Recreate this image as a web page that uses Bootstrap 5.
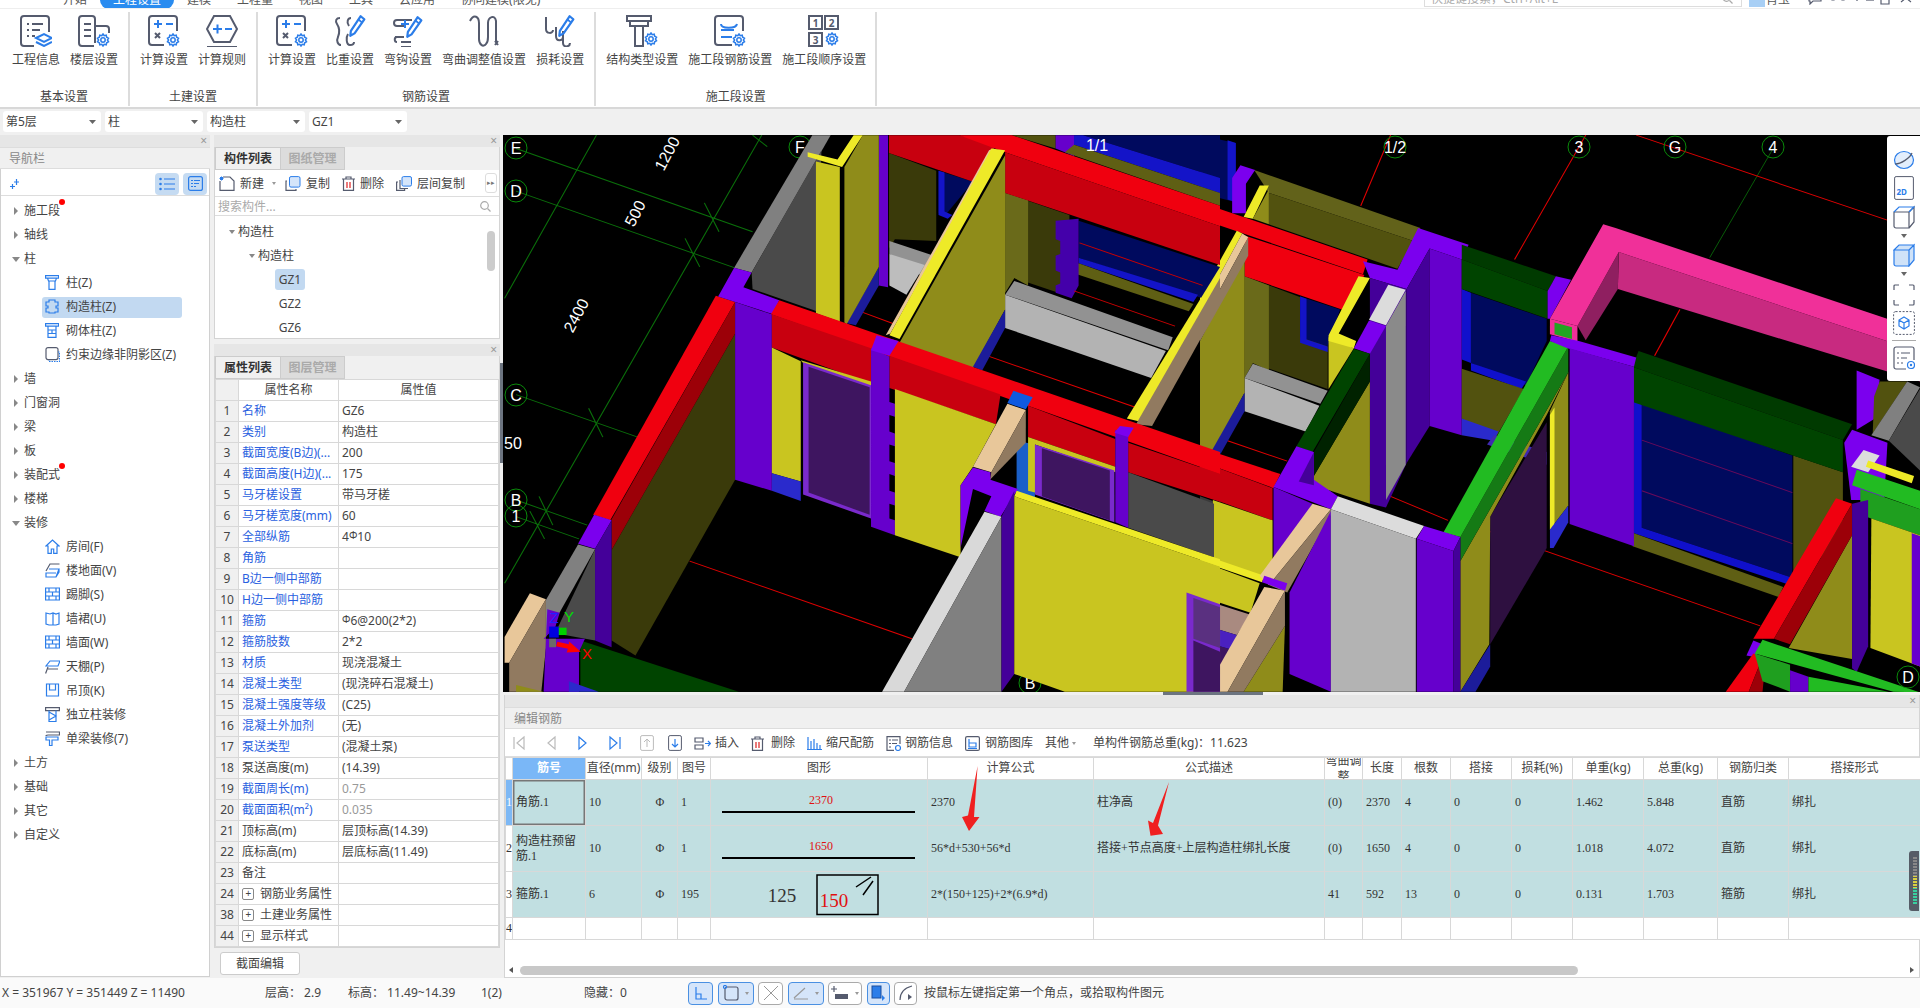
<!DOCTYPE html>
<html lang="zh-CN">
<head>
<meta charset="UTF-8">
<title>编辑钢筋</title>
<link href="https://cdn.jsdelivr.net/npm/bootstrap@5.3.0/dist/css/bootstrap.min.css" rel="stylesheet">
<style>
html,body{margin:0;height:100%;overflow:hidden}
body{width:1920px;height:1008px;background:#f0f0f0;color:#444;font:12px/1.3 "Noto Sans","Noto Sans CJK SC",sans-serif}
svg{display:block;flex:none}
.gl-st{fill:none;stroke:#555b6e;stroke-width:2}
.gl-bl{fill:none;stroke:#2b7de9;stroke-width:2}
.gl-thin{fill:none;stroke:#555b6e;stroke-width:1.2}
.gl-tb{fill:none;stroke:#2b7de9;stroke-width:1.2}
/* title strip, cut off at the top of the shot */
.gl-title{height:9px;background:#fff;overflow:hidden;border-bottom:1px solid #eee;color:#555}
.gl-title-in{height:18px;margin-top:-9px;line-height:18px}
.gl-menu{padding:0 13px;white-space:nowrap}
.gl-menu-on{background:#2a8cf0;color:#fff;border-radius:10px}
.gl-logo{width:50px}
.gl-winbtns{margin-left:auto;padding-right:8px}
.gl-search{position:relative;width:318px;height:17px;margin-top:-1px;border:1px solid #ddd;background:#fff;color:#aaa;padding:0 8px 0 6px;line-height:17px}
.gl-user{width:16px;height:16px;margin:0 1px 0 7px;background:#a8cff5}
.gl-wm5{margin-left:5px}.gl-wm6{margin-left:6px}.gl-wm7{margin-left:7px}.gl-wm8{margin-left:8px}.gl-wm10{margin-left:10px}.gl-wm18{margin-left:18px}
/* ribbon */
.gl-ribbon{height:100px;background:#fff;border-bottom:2px solid #d8d8d8}
.gl-group{position:relative;height:94px;margin-top:3px;padding:3px 10px 0;border-right:2px solid #dcdcdc;gap:10px;white-space:nowrap}
.gl-group:first-child{padding-left:12px}
.gl-tool{min-width:48px}
.gl-tool span{display:block;margin-top:5px;line-height:16px;text-align:center}
.gl-glabel{position:absolute;left:0;right:0;bottom:1px;text-align:center;line-height:16px}
/* combos */
.gl-combos{height:26px;padding:2px 0 0 3px;gap:4px}
.gl-combos .form-select{width:98px;height:21px;padding:0 0 0 3px;font-size:12px;line-height:21px;color:#444;border:0;border-radius:3px;background-size:7px 4px;background-position:right 5px center;background-image:url("data:image/svg+xml,%3Csvg xmlns='http://www.w3.org/2000/svg' viewBox='0 0 7 4'%3E%3Cpath fill='%23666' d='M0 0h7L3.5 4z'/%3E%3C/svg%3E")}
/* panels */
.gl-main{height:843px}
.gl-cross{height:12px;background:#e6e6e6;color:#999;font-size:12px;line-height:11px;text-align:right;padding-right:3px}
.gl-phead{height:22px;line-height:22px;padding-left:9px;background:#f0f0f0;color:#888;border-top:1px solid #ddd;border-bottom:1px solid #ddd;font-size:12px}
.gl-nav{width:210px;margin-right:4px}
.gl-navbody{height:808px;background:#fff;border:1px solid #d0d0d0;border-top:0}
.gl-navtool{height:27px;padding:3px 2px 0 9px;border-bottom:1px solid #ddd}
.gl-tbtn{width:24px;height:22px;background:#c5dbf2;border-radius:4px;margin-left:4px}
.gl-tree{list-style:none;margin:0;padding:3px 0 0}
.gl-tree li{position:relative;height:24px;line-height:24px;padding-left:23px;color:#444;white-space:nowrap}
.gl-tree li.gl-sub{padding-left:65px}
.gl-tree li.gl-sub svg{position:absolute;left:44px;top:4px;z-index:1}
.gl-tree li.gl-on::before{content:"";position:absolute;left:41px;top:2px;width:140px;height:21px;background:#c2d9f1;border-radius:3px;z-index:0}
.gl-tree li>span{position:relative}
.gl-arr,.gl-arrd{position:absolute;top:8px;width:0;height:0;border-style:solid}
.gl-arr{left:13px;border-width:4px 0 4px 4px;border-color:transparent transparent transparent #888}
.gl-arrd{left:11px;top:10px;border-width:5px 4px 0;border-color:#888 transparent transparent}
.gl-dot{position:absolute;top:-3px;right:-5px;width:6px;height:6px;border-radius:50%;background:#f00}
.gl-mid{width:286px;margin-right:3px}
.gl-midpanel{border:1px solid #d4d4d4;border-top:0;background:#fff}
.gl-tabs{height:23px;background:#f0f0f0;flex-wrap:nowrap}
.gl-tabs .nav-link{width:65px;height:23px;padding:0;text-align:center;line-height:22px;font-weight:700;font-size:12px;color:#aaa;background:#dcdcdc;border:1px solid #ccc;border-radius:0}
.gl-tabs .nav-link.active{background:#f0f0f0;color:#333;border-right:0}
.gl-mtool{height:27px;padding:1px 0 0 4px;border-bottom:1px solid #ddd;background:#fff;white-space:nowrap;position:relative}
.gl-mtool span{margin:0 12px 0 5px}
.gl-more{position:absolute;right:2px;top:3px;width:12px;height:20px;border:1px solid #ddd;border-radius:3px;color:#777;font-size:7px;line-height:18px;text-align:center}
.gl-msearch{height:19px;line-height:19px;padding:0 8px 0 3px;color:#aaa;border-bottom:1px solid #ddd;background:#fff}
.gl-ctree{height:122px;position:relative;background:#fff;padding-top:4px;overflow:hidden}
.gl-ctree div{position:relative;height:24px;line-height:24px;color:#444}
.gl-c1{padding-left:23px}.gl-c2{padding-left:43px}
.gl-c3{padding-left:60px}
.gl-c3 b{font-weight:400;display:inline-block;width:30px;height:21px;line-height:21px;text-align:center;border-radius:3px}
.gl-c3 b.gl-pick{background:#c2d9f1}
.gl-ctree .gl-arrd{left:14px;top:10px;border-width:4px 3px 0}
.gl-ctree .gl-c2 .gl-arrd{left:34px}
.gl-vbar{position:absolute;right:4px;top:15px;width:8px;height:40px;border-radius:4px;background:#ccc}
.gl-gap5{height:5px}
.gl-ptable{table-layout:fixed;width:283px;margin:0;font-size:12px;background:#fff}
.gl-ptable>:not(caption)>*>*{padding:0 3px;height:21px;line-height:20px;border:1px solid #d8d8d8;white-space:nowrap;overflow:hidden;color:#444;background:#fff;box-shadow:none}
.gl-ptable th{font-weight:400;text-align:center}
.gl-ptable td:first-child,.gl-ptable th:first-child{background:#f0f0f0;text-align:center;padding:0}
.gl-ptable td.gl-b{color:#2a5fe0}
.gl-ptable td.gl-mute{color:#999}
.gl-plus{display:inline-block;position:relative;top:2px;width:12px;height:12px;border:1px solid #888;border-radius:2px;line-height:9px;text-align:center;font-size:10px;margin:0 6px 0 0;vertical-align:top;margin-top:2px}
.gl-secbtn{width:80px;height:23px;margin:4px 0 0 6px;padding:0;font-size:12px;line-height:20px;color:#444;background:#fff;border:1px solid #ccc;border-radius:3px}
.gl-right{width:1417px}
.gl-canvas{position:relative;height:557px;background:#000;overflow:hidden}
.gl-viewbar{position:absolute;right:0;top:1px;width:33px;height:245px;background:#fff;border-radius:3px 0 0 3px;gap:5px;padding-top:13px}
.gl-vtri{width:0;height:0;border-style:solid;border-width:4px 3.5px 0;border-color:#666 transparent transparent}
.gl-vline{width:24px;border-top:1px solid #aaa}
.gl-vgap{margin-top:3px}
.gl-split{position:relative;height:3px}
.gl-split i{position:absolute;left:660px;top:0;width:100px;height:3px;background:#6c7480}
.gl-vsplit{width:3px;position:relative;margin-left:-3px;margin-right:0}
.gl-vsplit i{position:absolute;left:0;top:228px;width:3px;height:100px;background:#6c7480}
.gl-edit{position:relative;height:283px;margin-left:1px;border:1px solid #d4d4d4;border-top:0;background:#fff}
.gl-etool{height:28px;padding:1px 0 0 6px;border-bottom:1px solid #ddd;white-space:nowrap;color:#444}
.gl-etool .gl-nv{margin-right:16px}
.gl-etool .gl-up{margin-right:12px}
.gl-etool .gl-ic{margin-right:4px}
.gl-etool .gl-tx{margin-right:12px}
.gl-caret{width:0;height:0;margin:0 9px 0 -3px;border-style:solid;border-width:3px 2.5px 0;border-color:#999 transparent transparent}
.gl-etool .gl-caret{margin-right:17px}
.gl-grid{table-layout:fixed;width:1415px;margin:0;font:12px/1.2 "Liberation Serif","Noto Sans CJK SC",serif}
.gl-grid>:not(caption)>*>*{padding:0 2px 0 3px;border:1px solid #d8d8d8;background:#fff;color:#333;box-shadow:none;vertical-align:middle;overflow:hidden}
.gl-grid th{height:22px;padding:0;font-weight:400;text-align:center;white-space:nowrap;font-family:"Noto Sans","Noto Sans CJK SC",sans-serif;color:#444}
.gl-grid tbody tr.gl-row td{height:46px;background:#c1dfe1}
.gl-grid tbody tr td.gl-rn,.gl-grid tbody tr.gl-row td.gl-rn{background:#fff;padding:0;text-align:center}
.gl-grid tbody tr td.gl-cur{box-shadow:inset 0 0 0 1.5px #777}
.gl-grid tbody tr.gl-row td.gl-rn.gl-rnon{background:#7db8f5;color:#fff}
.gl-grid tr.gl-blank td{height:22px}
.gl-grid th.gl-headon{background:#7ab7f7;color:#fff;font-weight:700}
.gl-bendin{height:21px;overflow:hidden;display:flex;align-items:center;justify-content:center;line-height:16px;white-space:normal}
.gl-grid td.gl-shape{padding:0}
.gl-hs{position:absolute;left:4px;right:3px;bottom:2px;height:9px}
.gl-hs i{position:absolute;left:11px;top:0;width:1058px;height:9px;border-radius:5px;background:#c8c8c8}
.gl-hs b{position:absolute;top:1px;border-style:solid;border-width:3.5px 0 3.5px 4px;border-color:transparent transparent transparent #555}
.gl-hs b.gl-l{left:0;border-width:3.5px 4px 3.5px 0;border-color:transparent #555 transparent transparent}
.gl-hs b.gl-r{right:2px}
.gl-redarrow{position:absolute;left:0;top:0;width:1415px;height:283px;pointer-events:none}
.gl-gauge{position:absolute;right:0;top:156px;width:10px;height:60px;background:#555c66;border-radius:3px 0 0 3px}
.gl-gauge i{position:absolute;left:4px;top:6px;width:4px;height:48px;background:repeating-linear-gradient(transparent 0 2px,#555c66 2px 3px),linear-gradient(#888 0 40%,#d8d040 40% 65%,#39d0a0 65%)}
.gl-status{height:30px;background:#fafafa;color:#444;white-space:nowrap;font-size:12px}
.gl-s0{width:265px;padding-left:2px}.gl-s1{width:83px}.gl-s2{width:133px}.gl-s3{width:103px}.gl-s4{width:104px}
.gl-sbtns{gap:4.5px;margin-right:7px}
.gl-sbtn{height:23px;background:#fff;border:1px solid #aaa;border-radius:4px;gap:3px}
.gl-sbtn.gl-son{background:#d5e5fa;border-color:#4a90e2}
.gl-sw23{width:23px}.gl-sw25{width:25px}.gl-sw34{width:34px}.gl-sw36{width:36px}
.gl-sbtn .gl-caret{margin:0 0 0 3px}
.gl-small{font-size:10px;position:relative;top:-2px;line-height:0}
</style>
</head>
<body class="d-flex flex-column">

<svg width="0" height="0" class="position-absolute">
  <symbol id="gl-gear" viewBox="0 0 14 14"><path fill="none" stroke="#2b7de9" stroke-width="1.5" d="M7 1l1.200 1.700 2-.5.5 2 1.800 1L11.400 7l1.100 1.800-1.800 1-.5 2-2-.5L7 13l-1.200-1.700-2 .5-.5-2-1.800-1L2.600 7 1.500 5.200l1.800-1 .5-2 2 .5z"/><circle cx="7" cy="7" r="2.200" fill="none" stroke="#2b7de9" stroke-width="1.500"/></symbol>
  <symbol id="gl-pencil" viewBox="0 0 14 18"><path fill="none" stroke="#2b7de9" stroke-width="1.800" stroke-linejoin="round" d="M10 1l3 2.500L5 15l-3.500 2L2 13z"/><path stroke="#2b7de9" stroke-width="1.500" d="M8 3.500l3 2.500"/></symbol>
</svg>

<div class="gl-title">
  <div class="gl-title-in d-flex">
    <div class="gl-logo"></div>
    <div class="gl-menu">开始</div>
    <div class="gl-menu gl-menu-on">工程设置</div>
    <div class="gl-menu">建模</div>
    <div class="gl-menu">工程量</div>
    <div class="gl-menu">视图</div>
    <div class="gl-menu">工具</div>
    <div class="gl-menu">云应用</div>
    <div class="gl-menu">协同建模(限免)</div>
    <div class="gl-winbtns d-flex">
      <div class="gl-search d-flex justify-content-between align-items-center"><span>快捷键搜索，Ctrl+Alt+L</span><svg width="11" height="11" viewBox="0 0 11 11"><circle cx="4.500" cy="4.500" r="3.800" fill="none" stroke="#aaa" stroke-width="1.200"/><path stroke="#aaa" stroke-width="1.200" d="M7.500 7.500L10.500 10.500"/></svg></div>
      <div class="gl-user"></div>
      <div>肖玉</div>
      <svg class="gl-wm18" width="14" height="14" viewBox="0 0 14 14"><path class="gl-thin" d="M1 3h12v7H5l-3 3v-3H1z"/></svg>
      <svg class="gl-wm8" width="16" height="14" viewBox="0 0 16 14"><path class="gl-thin" d="M2 9V6a6 6 0 0 1 12 0v3M2 5h2v4H2zM12 5h2v4h-2z"/></svg>
      <svg class="gl-wm7" width="8" height="14" viewBox="0 0 8 14"><path class="gl-thin" d="M1 4a3 3 0 1 1 5 2L4 8v2"/></svg>
      <svg class="gl-wm5" width="8" height="14" viewBox="0 0 8 14"><path class="gl-thin" d="M0 9h8"/></svg>
      <svg class="gl-wm6" width="10" height="14" viewBox="0 0 10 14"><path class="gl-thin" d="M1 1h8v12H1z"/></svg>
      <svg class="gl-wm10" width="12" height="14" viewBox="0 0 12 14"><path class="gl-thin" d="M1 3l10 8M11 3L1 11"/></svg>
    </div>
  </div>
</div>

<div class="gl-ribbon d-flex">
  <div class="gl-group d-flex">
    <div class="gl-tool d-flex flex-column align-items-center">
      <svg width="32" height="32" viewBox="0 0 32 32"><path class="gl-st" d="M14 31H4a3 3 0 0 1-3-3V4a3 3 0 0 1 3-3h22a3 3 0 0 1 3 3v13M7 9h2M12 9h11M7 15h2M12 15h8M7 21h2M12 21h3"/><path class="gl-bl" d="M16 23l8-4 8 4-8 4zM16 27l8 4 8-4"/></svg>
      <span>工程信息</span>
    </div>
    <div class="gl-tool d-flex flex-column align-items-center">
      <svg width="32" height="32" viewBox="0 0 32 32"><path class="gl-st" d="M16 31H4a3 3 0 0 1-3-3V4a3 3 0 0 1 3-3h10a3 3 0 0 1 3 3v24M6 9h7M6 15h7M6 21h7M17 11h11a3 3 0 0 1 3 3v4"/><use href="#gl-gear" x="18" y="18" width="14" height="14"/></svg>
      <span>楼层设置</span>
    </div>
    <div class="gl-glabel">基本设置</div>
  </div>
  <div class="gl-group d-flex">
    <div class="gl-tool d-flex flex-column align-items-center">
      <svg width="32" height="32" viewBox="0 0 32 32"><path class="gl-st" d="M16 30H4a3 3 0 0 1-3-3V4a3 3 0 0 1 3-3h22a3 3 0 0 1 3 3v12"/><path class="gl-bl" d="M6 9h8M10 5v8M18 9h7"/><path class="gl-st" d="M7 18l5 5M12 18l-5 5"/><use href="#gl-gear" x="18" y="18" width="14" height="14"/></svg>
      <span>计算设置</span>
    </div>
    <div class="gl-tool d-flex flex-column align-items-center">
      <svg width="32" height="32" viewBox="0 0 32 32"><path class="gl-st" d="M8 1h16l7 13-7 13H8L1 14zM1 32h30"/><path class="gl-bl" d="M7 14h9M11.500 9.500v9M19 14h7"/></svg>
      <span>计算规则</span>
    </div>
    <div class="gl-glabel">土建设置</div>
  </div>
  <div class="gl-group d-flex">
    <div class="gl-tool d-flex flex-column align-items-center">
      <svg width="32" height="32" viewBox="0 0 32 32"><path class="gl-st" d="M16 30H4a3 3 0 0 1-3-3V4a3 3 0 0 1 3-3h22a3 3 0 0 1 3 3v12"/><path class="gl-bl" d="M6 9h8M10 5v8M18 9h7"/><path class="gl-st" d="M7 18l5 5M12 18l-5 5"/><use href="#gl-gear" x="18" y="18" width="14" height="14"/></svg>
      <span>计算设置</span>
    </div>
    <div class="gl-tool d-flex flex-column align-items-center">
      <svg width="32" height="32" viewBox="0 0 32 32"><path class="gl-st" d="M6 3C2 3 1 6 3 9c2 3 3 8 1 13-2 4 0 8 3 8M17 3c-3 0-5 4-2 8M14 19c-2 3-2 11 2 11 2 0 4-1 4-3"/><use href="#gl-pencil" x="14" y="0" width="18" height="22"/></svg>
      <span>比重设置</span>
    </div>
    <div class="gl-tool d-flex flex-column align-items-center">
      <svg width="32" height="32" viewBox="0 0 32 32"><path class="gl-st" d="M20 5H5C1 5 1 11 5 11h9M9 27h10M9 32h10M3 22h9M5 27c-3 0-3-5 0-5"/><path class="gl-bl" d="M13 5v8M9 9h8"/><use href="#gl-pencil" x="13" y="1" width="18" height="22"/></svg>
      <span>弯钩设置</span>
    </div>
    <div class="gl-tool d-flex flex-column align-items-center" style="min-width:84px">
      <svg width="32" height="32" viewBox="0 0 32 32"><path class="gl-st" d="M2 6c4-8 9-4 9 2v16c0 5 4 9 7 5 2-2 2-5 2-7V8c0-6 7-9 8-2v21M27 26l3 4M30 26l-3 4"/></svg>
      <span>弯曲调整值设置</span>
    </div>
    <div class="gl-tool d-flex flex-column align-items-center">
      <svg width="32" height="32" viewBox="0 0 32 32"><path class="gl-st" d="M2 2v12c0 5 7 5 7 1M12 12v9c0 6 7 5 7 1M19 16v12c0 5 7 4 7 0"/><use href="#gl-pencil" x="13" y="0" width="18" height="22"/></svg>
      <span>损耗设置</span>
    </div>
    <div class="gl-glabel">钢筋设置</div>
  </div>
  <div class="gl-group d-flex" style="width:281px">
    <div class="gl-tool d-flex flex-column align-items-center" style="min-width:72px">
      <svg width="32" height="32" viewBox="0 0 32 32"><path class="gl-st" d="M1 1h24v5H1zM4 6v5h18V6M9 11v20h8V11"/><use href="#gl-gear" x="18" y="17" width="14" height="14"/></svg>
      <span>结构类型设置</span>
    </div>
    <div class="gl-tool d-flex flex-column align-items-center" style="min-width:84px">
      <svg width="32" height="32" viewBox="0 0 32 32"><path class="gl-st" d="M18 30H4a3 3 0 0 1-3-3V4a3 3 0 0 1 3-3h22a3 3 0 0 1 3 3v12"/><path class="gl-bl" d="M7 9c0 5 15 5 16 0M7 15h13M7 22h11"/><use href="#gl-gear" x="18" y="18" width="14" height="14"/></svg>
      <span>施工段钢筋设置</span>
    </div>
    <div class="gl-tool d-flex flex-column align-items-center" style="min-width:84px">
      <svg width="32" height="32" viewBox="0 0 32 32"><g class="gl-st"><rect x="1" y="1" width="13" height="13"/><rect x="17" y="1" width="13" height="13"/><rect x="1" y="18" width="13" height="13"/></g><g font-size="10" fill="#555b6e" text-anchor="middle" font-weight="700"><text x="7.500" y="11.500">1</text><text x="23.500" y="11.500">2</text><text x="7.500" y="28.500">3</text></g><use href="#gl-gear" x="17" y="17" width="14" height="14"/></svg>
      <span>施工段顺序设置</span>
    </div>
    <div class="gl-glabel">施工段设置</div>
  </div>
</div>

<div class="gl-combos d-flex">
  <select class="form-select" aria-label="楼层"><option>第5层</option></select>
  <select class="form-select" aria-label="构件类型"><option>柱</option></select>
  <select class="form-select" aria-label="构件"><option>构造柱</option></select>
  <select class="form-select" aria-label="名称"><option>GZ1</option></select>
</div>

<div class="gl-main d-flex">
  <div class="gl-nav d-flex flex-column">
    <div class="gl-cross">×</div>
    <div class="gl-phead">导航栏</div>
    <div class="gl-navbody">
      <div class="gl-navtool d-flex align-items-center">
        <svg width="10" height="10" viewBox="0 0 10 10"><path class="gl-tb" d="M6.500 0v6M4 3h5M2.500 5v5M0 7.500h5"/></svg>
        <div class="flex-grow-1"></div>
        <div class="gl-tbtn d-flex align-items-center justify-content-center"><svg width="16" height="14" viewBox="0 0 16 14"><path class="gl-tb" d="M5 2h11M5 7h11M5 12h11"/><g fill="#2b7de9"><circle cx="1.500" cy="2" r="1.300"/><circle cx="1.500" cy="7" r="1.300"/><circle cx="1.500" cy="12" r="1.300"/></g></svg></div>
        <div class="gl-tbtn d-flex align-items-center justify-content-center"><svg width="15" height="15" viewBox="0 0 15 15"><rect class="gl-tb" x=".6" y=".6" width="13.800" height="13.800" rx="2"/><path class="gl-tb" d="M3 4.500h2M6 4.500h6M3 7.500h2M6 7.500h5M3 10.500h2M6 10.500h2"/></svg></div>
      </div>
      <ul class="gl-tree">
        <li><i class="gl-arr"></i><span>施工段<i class="gl-dot"></i></span></li>
        <li><i class="gl-arr"></i><span>轴线</span></li>
        <li><i class="gl-arrd"></i><span>柱</span></li>
        <li class="gl-sub"><svg width="14" height="15" viewBox="0 0 14 15"><path class="gl-tb" d="M.6.600h13v2.500H.6zM2.500 3.100h9L10.500 6h-7zM4 6v8.400h6V6"/></svg><span>柱(Z)</span></li>
        <li class="gl-sub gl-on"><svg width="14" height="15" viewBox="0 0 14 15"><path class="gl-tb" d="M4 1h6v2h3v4h-2v2h2v4h-3v1H4v-1H1V9h2V7H1V3h3z"/></svg><span>构造柱(Z)</span></li>
        <li class="gl-sub"><svg width="14" height="15" viewBox="0 0 14 15"><path class="gl-tb" d="M.6.600h13v2.500H.6zM3 3.100v11.300h8V3.100M3 7h8M3 10.500h8M7 7v3.500"/></svg><span>砌体柱(Z)</span></li>
        <li class="gl-sub"><svg width="15" height="15" viewBox="0 0 15 15"><path class="gl-thin" d="M3 .6h8a2 2 0 0 1 2 2v8a2 2 0 0 1-2 2H3a2 2 0 0 1-2-2v-8a2 2 0 0 1 2-2z"/><path class="gl-tb" d="M13 5h1.500v9.500H4V13" stroke-dasharray="1.500 1"/></svg><span>约束边缘非阴影区(Z)</span></li>
        <li><i class="gl-arr"></i><span>墙</span></li>
        <li><i class="gl-arr"></i><span>门窗洞</span></li>
        <li><i class="gl-arr"></i><span>梁</span></li>
        <li><i class="gl-arr"></i><span>板</span></li>
        <li><i class="gl-arr"></i><span>装配式<i class="gl-dot"></i></span></li>
        <li><i class="gl-arr"></i><span>楼梯</span></li>
        <li><i class="gl-arrd"></i><span>装修</span></li>
        <li class="gl-sub"><svg width="15" height="15" viewBox="0 0 15 15"><path class="gl-tb" d="M1 7l6.500-6L14 7h-2v7.400H8.700V10H6.300v4.400H3V7z" fill="#cfe2f8"/></svg><span>房间(F)</span></li>
        <li class="gl-sub"><svg width="15" height="15" viewBox="0 0 15 15"><path class="gl-thin" d="M14.500 1H5L1 8"/><path class="gl-tb" d="M4 6h10l-3 8H1v-4h10M14 6v3l-3 5"/></svg><span>楼地面(V)</span></li>
        <li class="gl-sub"><svg width="15" height="15" viewBox="0 0 15 15"><path class="gl-tb" d="M.6 1h13.800v12H.6zM.6 5h13.800M.6 9h13.800M7.500 5v4M4 1v4M11 1v4M4 9v4M11 9v4"/></svg><span>踢脚(S)</span></li>
        <li class="gl-sub"><svg width="15" height="15" viewBox="0 0 15 15"><path class="gl-tb" d="M1 2l4 1 3-1 3 1 3-1v11l-3 1H4l-3-1zM8 2v12"/></svg><span>墙裙(U)</span></li>
        <li class="gl-sub"><svg width="15" height="15" viewBox="0 0 15 15"><path class="gl-tb" fill="#d8e7f9" d="M.6 1h13.800v12H.6zM.6 5h13.800M.6 9h13.800M7.500 5v4M4 1v4M11 1v4M4 9v4M11 9v4"/></svg><span>墙面(W)</span></li>
        <li class="gl-sub"><svg width="15" height="15" viewBox="0 0 15 15"><path class="gl-tb" d="M5 2h10l-2 5H1zM3 7H13"/><path class="gl-thin" d="M3 8L.6 14.500M3 10h10"/></svg><span>天棚(P)</span></li>
        <li class="gl-sub"><svg width="15" height="15" viewBox="0 0 15 15"><path class="gl-tb" fill="#cfe2f8" d="M1.500 1h12v12h-12z"/><path class="gl-tb" d="M4.500 1v6h6V1" fill="#fff"/></svg><span>吊顶(K)</span></li>
        <li class="gl-sub"><svg width="15" height="15" viewBox="0 0 15 15"><path class="gl-thin" d="M.6.600h13.800v3H.6z"/><path class="gl-tb" d="M4 3.600v11h7v-11M4 5l7 4-7 4"/></svg><span>独立柱装修</span></li>
        <li class="gl-sub"><svg width="15" height="15" viewBox="0 0 15 15"><path class="gl-thin" d="M1 1h13.500v3H3C1 4 1 5 1 5"/><path class="gl-tb" d="M1 6h12v3H7v5.500H4.500V9H1z"/></svg><span>单梁装修(7)</span></li>
        <li><i class="gl-arr"></i><span>土方</span></li>
        <li><i class="gl-arr"></i><span>基础</span></li>
        <li><i class="gl-arr"></i><span>其它</span></li>
        <li><i class="gl-arr"></i><span>自定义</span></li>
      </ul>
    </div>
  </div>

  <div class="gl-mid d-flex flex-column">
    <div class="gl-cross">×</div>
    <div class="gl-midpanel">
      <ul class="nav gl-tabs">
        <li class="nav-item"><a class="nav-link active" href="#">构件列表</a></li>
        <li class="nav-item"><a class="nav-link" href="#">图纸管理</a></li>
      </ul>
      <div class="gl-mtool d-flex align-items-center">
        <svg width="16" height="15" viewBox="0 0 16 15"><path class="gl-thin" d="M4 1h7l4 4v9.400H1V5"/><path stroke="#2b7de9" stroke-width="1" d="M1 1l3 3M4 1L1 4M2.500 .5v4M.5 2.500h4"/></svg><span style="margin-right:4px">新建</span><i class="gl-caret" style="margin:0 9px 0 4px"></i>
        <svg width="16" height="15" viewBox="0 0 16 15"><path class="gl-thin" d="M2 5H1v9.400h10V13"/><rect x="4.500" y=".6" width="10.500" height="10.500" rx="1.500" fill="#d5e5fa" stroke="#2b7de9"/></svg><span>复制</span>
        <svg width="13" height="15" viewBox="0 0 13 15"><path class="gl-thin" d="M0 3h13M4 3V1h5v2M1.500 3v11.400h10V3"/><path stroke="#d22" stroke-width="1.200" d="M5 6v6M8 6v6"/></svg><span>删除</span>
        <svg width="16" height="15" viewBox="0 0 16 15"><path class="gl-thin" d="M2 6H.6v8.400h8V13M4 4v8.500h8"/><rect x="6" y=".6" width="9.500" height="9.500" rx="1.500" fill="#d5e5fa" stroke="#2b7de9"/></svg><span>层间复制</span>
        <div class="gl-more">▸▸</div>
      </div>
      <div class="gl-msearch d-flex align-items-center justify-content-between">
        <span>搜索构件...</span>
        <svg width="11" height="11" viewBox="0 0 11 11"><circle cx="4.500" cy="4.500" r="3.800" fill="none" stroke="#aaa" stroke-width="1.200"/><path stroke="#aaa" stroke-width="1.200" d="M7.500 7.500L10.500 10.500"/></svg>
      </div>
      <div class="gl-ctree">
        <div class="gl-c1"><i class="gl-arrd"></i>构造柱</div>
        <div class="gl-c2"><i class="gl-arrd"></i>构造柱</div>
        <div class="gl-c3"><b class="gl-pick">GZ1</b></div>
        <div class="gl-c3"><b>GZ2</b></div>
        <div class="gl-c3"><b>GZ6</b></div>
        <i class="gl-vbar"></i>
      </div>
    </div>
    <div class="gl-gap5"></div>
    <div class="gl-cross">×</div>
    <div class="gl-midpanel">
      <ul class="nav gl-tabs">
        <li class="nav-item"><a class="nav-link active" href="#">属性列表</a></li>
        <li class="nav-item"><a class="nav-link" href="#">图层管理</a></li>
      </ul>
      <table class="table gl-ptable">
        <colgroup><col width="23"><col width="100"><col width="160"></colgroup>
        <thead><tr><th></th><th>属性名称</th><th>属性值</th></tr></thead>
        <tbody>
          <tr><td>1</td><td class="gl-b">名称</td><td>GZ6</td></tr>
          <tr><td>2</td><td class="gl-b">类别</td><td>构造柱</td></tr>
          <tr><td>3</td><td class="gl-b">截面宽度(B边)(...</td><td>200</td></tr>
          <tr><td>4</td><td class="gl-b">截面高度(H边)(...</td><td>175</td></tr>
          <tr><td>5</td><td class="gl-b">马牙槎设置</td><td>带马牙槎</td></tr>
          <tr><td>6</td><td class="gl-b">马牙槎宽度(mm)</td><td>60</td></tr>
          <tr><td>7</td><td class="gl-b">全部纵筋</td><td>4<span class="gl-small">Φ</span>10</td></tr>
          <tr><td>8</td><td class="gl-b">角筋</td><td></td></tr>
          <tr><td>9</td><td class="gl-b">B边一侧中部筋</td><td></td></tr>
          <tr><td>10</td><td class="gl-b">H边一侧中部筋</td><td></td></tr>
          <tr><td>11</td><td class="gl-b">箍筋</td><td><span class="gl-small">Φ</span>6@200(2*2)</td></tr>
          <tr><td>12</td><td class="gl-b">箍筋肢数</td><td>2*2</td></tr>
          <tr><td>13</td><td class="gl-b">材质</td><td>现浇混凝土</td></tr>
          <tr><td>14</td><td class="gl-b">混凝土类型</td><td>(现浇碎石混凝土)</td></tr>
          <tr><td>15</td><td class="gl-b">混凝土强度等级</td><td>(C25)</td></tr>
          <tr><td>16</td><td class="gl-b">混凝土外加剂</td><td>(无)</td></tr>
          <tr><td>17</td><td class="gl-b">泵送类型</td><td>(混凝土泵)</td></tr>
          <tr><td>18</td><td>泵送高度(m)</td><td>(14.39)</td></tr>
          <tr><td>19</td><td class="gl-b">截面周长(m)</td><td class="gl-mute">0.75</td></tr>
          <tr><td>20</td><td class="gl-b">截面面积(m²)</td><td class="gl-mute">0.035</td></tr>
          <tr><td>21</td><td>顶标高(m)</td><td>层顶标高(14.39)</td></tr>
          <tr><td>22</td><td>底标高(m)</td><td>层底标高(11.49)</td></tr>
          <tr><td>23</td><td>备注</td><td></td></tr>
          <tr><td>24</td><td><i class="gl-plus">+</i>钢筋业务属性</td><td></td></tr>
          <tr><td>38</td><td><i class="gl-plus">+</i>土建业务属性</td><td></td></tr>
          <tr><td>44</td><td><i class="gl-plus">+</i>显示样式</td><td></td></tr>
        </tbody>
      </table>
    </div>
    <button type="button" class="btn gl-secbtn">截面编辑</button>
  </div>

  <div class="gl-vsplit"><i></i></div>

  <div class="gl-right d-flex flex-column">
    <div class="gl-canvas">
      <svg width="1417" height="557" viewBox="503 135 1417 557">
        <!-- axis marks that the walls cover -->
        <g fill="none" stroke="#0a8a0a"><circle cx="800" cy="147" r="11"/><circle cx="1030" cy="683" r="11"/></g>
        <g fill="#fff" font-family="'Liberation Sans',sans-serif" font-size="16" text-anchor="middle"><text x="800" y="153">F</text><text x="1030" y="689">B</text></g>
        <!-- right half, coordinates of the second crop -->
        <g transform="translate(1200 130) scale(.4592 .37)">
          <g stroke="#0a6e0a" stroke-width="2" fill="none"><path d="M1248 50L1110 345"/></g>
          <g stroke="#e00000" stroke-width="2.500" fill="none"><path d="M950 14L1500 245M415 14L350 205M840 14L685 350M1045 485L990 610M415 990L540 1055M630 1085L1220 1340M60 840L190 895"/></g>
          <polygon fill="#000a5e" points="0,14 78,35 78,195 0,170"/>
          <polygon fill="#1414c8" points="60,28 78,35 78,195 60,188"/>
          <polygon fill="#62621a" points="118,108 480,265 465,300 150,170"/>
          <polygon fill="#52520f" points="150,170 465,300 430,375 150,255"/>
          <polygon fill="#7b00ee" points="70,130 88,95 120,108 100,145 100,225 70,225"/>
          <polygon fill="#eeea28" points="130,150 150,150 115,240 95,235"/>
          <polygon fill="#8f8c1a" points="150,160 150,255 115,240"/>
          <polygon fill="#3a3a0a" points="97,395 278,480 278,700 115,630 97,670"/>
          <polygon fill="#6a6a1a" points="97,395 150,420 150,650 115,630 97,670"/>
          <polygon fill="#000a5e" points="218,450 305,485 278,585 218,560"/>
          <polygon fill="#1414c8" points="218,450 232,456 232,566 278,585 278,600 218,575"/>
          <polygon fill="#929292" points="115,632 278,705 262,740 97,670"/>
          <polygon fill="#b3b3b3" points="97,670 260,745 230,815 97,760"/>
          <polygon fill="#f0000f" points="0,195 365,350 355,390 0,240"/>
          <polygon fill="#f0000f" points="97,285 358,392 320,490 97,395"/>
          <polygon fill="#8f8c1a" points="97,340 97,710 25,880 0,860 0,570"/>
          <polygon fill="#1c1c9a" points="97,710 97,760 45,875 25,868"/>
          <polygon fill="#eeea28" points="80,272 92,280 0,490 0,450"/>
          <polygon fill="#e8c79a" points="92,280 105,290 0,530 0,490"/>
          <polygon fill="#917a60" points="105,290 105,340 0,570 0,530"/>
          <polygon fill="#c9c520" points="280,560 335,590 280,700"/>
          <polygon fill="#eeea28" points="345,395 370,400 302,550 340,570 335,590 280,570 280,555"/>
          <polygon fill="#7b00ee" points="355,355 430,378 475,265 585,310 570,350 500,320 450,430 370,400"/>
          <polygon fill="#440099" points="370,400 450,430 450,900 405,1020 370,1010"/>
          <polygon fill="#440099" points="450,430 500,320 500,800 450,900"/>
          <polygon fill="#6600cc" points="500,320 570,350 570,825 500,800"/>
          <polygon fill="#dcdcdc" points="410,418 448,432 405,528 368,513"/>
          <polygon fill="#8a8a8a" points="405,530 448,435 448,905 405,1000"/>
          <polygon fill="#7b00ee" points="368,515 405,530 370,605 335,590"/>
          <polygon fill="#8f8c1a" points="370,680 370,1010 248,960 248,935"/>
          <polygon fill="#004400" points="335,592 370,605 245,870 210,855"/>
          <polygon fill="#002200" points="370,605 370,680 248,935 248,870"/>
          <polygon fill="#f0000f" points="0,858 175,930 160,968 0,895"/>
          <polygon fill="#c8000f" points="0,895 158,968 158,1055 0,985"/>
          <polygon fill="#3a3a3a" points="0,990 28,1003 28,1150 0,1140"/>
          <polygon fill="#c9c520" points="28,1000 158,1055 158,1200 145,1215 28,1160"/>
          <polygon fill="#eeea28" points="0,1145 140,1205 135,1222 0,1165"/>
          <polygon fill="#c9c520" points="0,1165 130,1225 110,1305 0,1260"/>
          <polygon fill="#5a3080" points="0,1265 28,1278 28,1345 0,1335"/>
          <polygon fill="#a98a80" points="28,1278 110,1310 80,1365 28,1345"/>
          <polygon fill="#3e1560" points="0,1380 70,1405 40,1518 0,1518"/>
          <polygon fill="#4a20c0" points="28,1345 80,1365 70,1405 28,1390"/>
          <polygon fill="#7b00ee" points="210,855 248,870 248,945 300,990 285,1025 160,965"/>
          <polygon fill="#440099" points="215,950 248,870 248,960"/>
          <polygon fill="#6600cc" points="160,965 245,1010 160,1200"/>
          <polygon fill="#e8c79a" points="245,1010 285,1025 150,1230 130,1205"/>
          <polygon fill="#917a60" points="285,1025 285,1040 190,1250 150,1230"/>
          <polygon fill="#6600cc" points="195,1250 285,1030 285,1518 195,1470"/>
          <polygon fill="#8f8c1a" points="185,1340 180,1518 95,1518"/>
          <polygon fill="#7b00ee" points="140,1205 190,1225 185,1245 135,1222"/>
          <polygon fill="#e8c79a" points="140,1235 185,1245 60,1518 10,1518"/>
          <polygon fill="#917a60" points="185,1245 185,1340 95,1518 60,1518"/>
          <polygon fill="#dcdcdc" points="300,990 488,1070 470,1105 285,1025"/>
          <polygon fill="#b3b3b3" points="285,1025 470,1105 470,1518 285,1518"/>
          <polygon fill="#000a5e" points="590,440 755,510 755,570 710,690 590,630"/>
          <polygon fill="#1010cc" points="570,430 590,440 590,630 570,620"/>
          <polygon fill="#1010cc" points="590,630 710,680 700,700 590,650"/>
          <polygon fill="#52520f" points="570,645 705,700 640,840 570,780"/>
          <polygon fill="#2a2acc" points="570,780 650,815 640,840 570,825"/>
          <polygon fill="#3f2ab0" points="640,825 755,870 755,905 625,850"/>
          <polygon fill="#003a00" points="570,310 775,395 757,435 570,350"/>
          <polygon fill="#004400" points="570,350 757,435 757,510 570,430"/>
          <polygon fill="#7b00ee" points="757,435 775,395 808,405 762,510 757,510"/>
          <polygon fill="#2e1040" points="632,1045 755,790 755,1130 632,1390"/>
          <polygon fill="#8f8c1a" points="802,655 567,1165 567,1518 630,1390 632,1045 755,770"/>
          <polygon fill="#1c1c9a" points="632,1390 632,1450 600,1518 567,1518"/>
          <polygon fill="#8f8c1a" points="762,760 802,655 802,1015 762,1080"/>
          <polygon fill="#eeea28" points="762,770 772,750 772,1080 762,1080"/>
          <polygon fill="#2a2acc" points="762,1080 802,1015 802,1060 770,1130 762,1130"/>
          <polygon fill="#157a15" points="802,585 802,655 567,1165 567,1100"/>
          <polygon fill="#22bb22" points="762,570 802,585 567,1100 530,1088"/>
          <polygon fill="#7b00ee" points="488,1070 567,1100 552,1138 472,1105"/>
          <polygon fill="#6600cc" points="472,1105 552,1138 552,1518 472,1518"/>
          <polygon fill="#440099" points="552,1138 567,1100 567,1518 552,1518"/>
          <polygon fill="#52520f" points="1292,880 1400,925 1400,1110 1292,1210"/>
          <polygon fill="#000a5e" points="962,735 1290,880 1290,1210 962,1075"/>
          <g stroke="#6a0a5a" stroke-width="2.500" fill="none"><path d="M962 838L1290 980M962 975L1290 1118"/></g>
          <polygon fill="#1010cc" points="945,730 962,738 962,1075 1290,1210 1280,1228 945,1090"/>
          <polygon fill="#5f5f14" points="945,1090 1270,1235 1260,1262 942,1125"/>
          <polygon fill="#003a00" points="955,597 1420,795 1400,838 942,640"/>
          <polygon fill="#004400" points="942,640 1400,838 1400,925 942,735"/>
          <polygon fill="#c82a80" points="912,330 1568,600 1568,680 910,430"/>
          <polygon fill="#8f1f60" points="912,330 910,430 840,568 822,530"/>
          <polygon fill="#f03099" points="878,255 905,265 1568,540 1568,600 912,330 822,530 762,510"/>
          <polygon fill="#f03099" points="762,510 822,530 822,572 762,552"/>
          <polygon fill="#22a522" points="772,520 810,533 810,565 772,552"/>
          <polygon fill="#7b00ee" points="765,555 825,570 950,615 945,640 800,590 762,570"/>
          <polygon fill="#6600cc" points="805,590 945,640 945,1125 805,1065"/>
          <polygon fill="#7b00ee" points="1430,650 1480,675 1470,780 1430,810"/>
          <polygon fill="#52520f" points="1480,680 1540,680 1465,820 1468,720"/>
          <polygon fill="#808080" points="1540,680 1568,695 1500,840 1462,825"/>
          <polygon fill="#4a4a4a" points="1568,700 1568,920 1500,840"/>
          <polygon fill="#7b00ee" points="1420,810 1497,845 1490,1000 1418,1000 1403,845"/>
          <polygon fill="#dcdcdc" points="1445,865 1480,880 1455,925 1418,910"/>
          <polygon fill="#eeea28" points="1455,893 1555,935 1550,955 1450,910"/>
          <polygon fill="#22bb22" points="1430,918 1568,975 1568,1025 1420,960"/>
          <polygon fill="#1f9f1f" points="1438,970 1568,1025 1568,1095 1438,1040"/>
          <polygon fill="#8f8c1a" points="1420,1095 1420,1430 1282,1400"/>
          <polygon fill="#f0000f" points="1385,995 1420,1010 1250,1375 1205,1375"/>
          <polygon fill="#9c0008" points="1420,1010 1420,1095 1285,1390 1250,1375"/>
          <polygon fill="#440099" points="1420,1010 1455,1000 1455,1395 1430,1465 1420,1455"/>
          <polygon fill="#c9c520" points="1462,1050 1568,1095 1568,1450 1460,1400"/>
          <polygon fill="#6600cc" points="1550,1090 1568,1097 1568,1450 1550,1442"/>
          <polygon fill="#7b00ee" points="1190,1420 1205,1380 1225,1390 1210,1425"/>
          <polygon fill="#f0000f" points="1205,1415 1225,1425 1195,1518 1145,1518"/>
          <polygon fill="#9c0008" points="1225,1425 1232,1430 1225,1518 1195,1518"/>
          <polygon fill="#22bb22" points="1225,1378 1568,1520 1510,1518 1208,1415"/>
          <polygon fill="#1f9f1f" points="1208,1415 1285,1445 1285,1518 1225,1490"/>
          <polygon fill="#6600cc" points="1285,1460 1325,1478 1325,1518 1285,1518"/>
          <polygon fill="#22bb22" points="1325,1478 1500,1518 1325,1518"/>
        </g>
        <!-- left half, coordinates of the first crop -->
        <g transform="translate(500 130) scale(.4592 .37)">
          <g stroke="#0a6e0a" stroke-width="2.500" fill="none">
            <path d="M35 50L550 275M35 165L510 372M35 715L300 830M35 1000L190 1068M35 1045L172 1105M210 14L10 455M570 14L10 1225M445 197L477 275M403 293L435 370M193 752L224 830M85 990L115 1068M65 1030L97 1105M550 14L582 45"/>
          </g>
          <g stroke="#e00000" stroke-width="2.500" fill="none"><path d="M790 493L860 525M1065 612L1385 750M413 1165L897 1375"/></g>
          <polygon fill="#808080" points="510,372 548,385 720,14 680,14"/>
          <polygon fill="#4a4a4a" points="548,385 700,55 690,490 550,430"/>
          <polygon fill="#3a3a0a" points="847,62 950,110 950,300 860,295 847,320"/>
          <polygon fill="#000a5e" points="955,110 1030,140 970,230 955,225"/>
          <polygon fill="#1414c8" points="955,110 968,115 968,220 985,230 975,240 955,230"/>
          <polygon fill="#c8000f" points="847,14 1000,14 1080,40 1030,140 847,62"/>
          <polygon fill="#929292" points="848,300 945,340 925,400 848,335"/>
          <polygon fill="#bdbdbd" points="848,335 925,365 885,445 848,420"/>
          <polygon fill="#6600cc" points="825,14 845,14 845,425 825,420"/>
          <polygon fill="#1c1c9a" points="825,370 825,420 775,528 755,522"/>
          <polygon fill="#c9c520" points="688,85 740,100 740,518 688,495"/>
          <polygon fill="#8f8c1a" points="750,100 790,14 825,14 825,370 755,525 750,520"/>
          <polygon fill="#eeea28" points="670,60 735,80 770,14 790,14 745,100 670,72"/>
          <polygon fill="#52520f" points="1115,14 1210,14 1210,50"/>
          <polygon fill="#6600cc" points="1210,14 1250,14 1250,70 1210,50"/>
          <polygon fill="#000a5e" points="1270,14 1568,14 1568,130"/>
          <polygon fill="#1414c8" points="1250,14 1270,14 1568,130 1568,170 1250,40"/>
          <polygon fill="#5f5f14" points="1250,40 1568,170 1568,205 1230,60"/>
          <polygon fill="#3a3a0a" points="1100,170 1240,230 1240,450 1120,400 1100,440"/>
          <polygon fill="#6a6a1a" points="1100,170 1150,190 1150,420 1120,400 1100,440"/>
          <polygon fill="#000a5e" points="1260,245 1568,370 1568,470 1260,345"/>
          <polygon fill="#1414c8" points="1260,345 1520,445 1510,465 1260,360"/>
          <polygon fill="#5f5f14" points="1260,360 1510,470 1500,490 1245,385"/>
          <polygon fill="#4400aa" points="1210,245 1260,240 1260,420 1245,455 1210,440 1210,420 1220,415 1220,385 1210,380 1210,340 1220,335 1220,300 1210,295"/>
          <g stroke="#c00" stroke-width="2.500" fill="none"><path d="M1250 435L1470 530M1262 305L1530 420"/></g>
          <polygon fill="#929292" points="1120,408 1465,560 1455,595 1100,445"/>
          <polygon fill="#b3b3b3" points="1100,445 1450,597 1418,670 1100,535"/>
          <polygon fill="#f0000f" points="1000,14 1115,14 1568,205 1568,260 1100,60"/>
          <polygon fill="#c8000f" points="1100,60 1568,260 1568,365 1100,170"/>
          <polygon fill="#8f8c1a" points="1100,68 1100,485 1030,645 870,575"/>
          <polygon fill="#1c1c9a" points="1100,485 1100,535 1050,650 1030,640"/>
          <polygon fill="#e8c79a" points="1065,55 1075,50 850,550 840,555"/>
          <polygon fill="#eeea28" points="1070,50 1100,55 870,565 848,555"/>
          <polygon fill="#eeea28" points="1568,370 1568,410 1400,790 1365,780"/>
          <polygon fill="#917a60" points="1568,400 1568,470 1420,800 1385,795"/>
          <polygon fill="#3a3a0a" points="512,550 512,945 295,1420 243,1380 243,1135"/>
          <polygon fill="#f0000f" points="470,448 512,465 240,1055 203,1040"/>
          <polygon fill="#9c0008" points="512,465 512,550 243,1135 243,1052"/>
          <polygon fill="#7b00ee" points="510,372 548,385 530,425 608,460 595,498 475,450"/>
          <polygon fill="#6600cc" points="512,465 592,498 592,975 512,945"/>
          <polygon fill="#f0000f" points="608,460 1568,870 1568,930 590,498"/>
          <polygon fill="#c8000f" points="592,498 808,590 808,685 592,588"/>
          <polygon fill="#c8000f" points="848,610 1090,715 1080,795 848,697"/>
          <polygon fill="#c8000f" points="1150,745 1340,835 1340,910 1150,830"/>
          <polygon fill="#c8000f" points="1368,845 1568,930 1568,1005 1368,925"/>
          <polygon fill="#c9c520" points="592,588 655,625 655,950 592,928"/>
          <polygon fill="#2a2acc" points="592,928 655,950 655,1003 592,975"/>
          <polygon fill="#c9c520" points="655,622 808,680 808,695 660,630"/>
          <polygon fill="#7a2acc" points="660,628 808,690 808,1050 660,985"/>
          <polygon fill="#3e1560" points="672,640 805,695 805,1040 672,980"/>
          <polygon fill="#6600cc" points="808,590 848,612 848,735 860,740 860,775 848,770 848,815 860,820 860,855 848,850 848,895 860,900 860,935 848,930 848,975 860,980 860,1015 848,1010 848,1050 860,1055 860,1095 808,1072"/>
          <polygon fill="#7b00ee" points="820,555 868,570 848,610 808,595"/>
          <polygon fill="#c9c520" points="860,700 1080,795 1030,910 1003,960 1003,1155 860,1095"/>
          <polygon fill="#1a5fc8" points="1125,840 1165,850 1165,1000 1125,980"/>
          <polygon fill="#c9c520" points="1150,830 1340,910 1340,925 1165,850 1165,980 1150,975"/>
          <polygon fill="#7a2acc" points="1165,850 1338,920 1338,1060 1165,985"/>
          <polygon fill="#3e1560" points="1180,860 1328,920 1328,1055 1180,990"/>
          <polygon fill="#4a4a4a" points="1368,925 1555,1010 1555,1155 1368,1075"/>
          <polygon fill="#c9c520" points="1555,1010 1568,1016 1568,1160 1555,1155"/>
          <polygon fill="#6600cc" points="1340,810 1368,820 1368,1075 1340,1060"/>
          <polygon fill="#7b00ee" points="1350,800 1380,805 1368,830 1338,818"/>
          <polygon fill="#e8c79a" points="1105,740 1145,757 1070,925 1030,910"/>
          <polygon fill="#917a60" points="1145,757 1145,845 1067,945 1070,925"/>
          <polygon fill="#0f5ae0" points="1118,705 1160,722 1145,755 1105,738"/>
          <polygon fill="#7b00ee" points="1030,912 1068,925 1068,945 1128,970 1090,1045 1055,1030 1070,990 1030,970 1003,1130 1003,960"/>
          <polygon fill="#d9d9d9" points="1055,1032 1092,1045 880,1518 832,1518"/>
          <polygon fill="#808080" points="1092,1045 1092,1518 880,1518"/>
          <polygon fill="#440099" points="1092,1045 1120,975 1120,1470 1092,1518"/>
          <polygon fill="#c9c520" points="1120,990 1568,1180 1568,1518 1230,1518 1120,1470"/>
          <polygon fill="#eeea28" points="1125,975 1568,1160 1568,1180 1120,990"/>
          <polygon fill="#7a2acc" points="1495,1250 1568,1282 1568,1518 1495,1518"/>
          <polygon fill="#5a3080" points="1510,1265 1568,1290 1568,1400 1510,1375"/>
          <polygon fill="#3e1560" points="1510,1380 1568,1410 1568,1518 1510,1518"/>
          <polygon fill="#004400" points="175,1380 520,1518 175,1518"/>
          <polygon fill="#808080" points="170,1120 207,1133 100,1370 100,1270"/>
          <polygon fill="#4a4a4a" points="207,1133 207,1380 120,1360"/>
          <polygon fill="#7b00ee" points="205,1040 243,1055 207,1132 170,1118"/>
          <polygon fill="#440099" points="207,1132 243,1055 243,1398 207,1380"/>
          <polygon fill="#e8c79a" points="65,1252 100,1268 20,1440 10,1440 10,1370"/>
          <polygon fill="#917a60" points="20,1440 100,1268 100,1400 90,1518 20,1518"/>
          <polygon fill="#6600cc" points="103,1295 130,1305 120,1345 95,1375 185,1375 172,1410 172,1518 95,1518"/>
          <polygon fill="#2a2acc" points="150,1490 215,1518 150,1518"/>
          <polygon fill="#8f8c1a" points="35,1500 95,1518 35,1518"/>
          <polygon fill="#6a6a6a" points="107,1375 122,1375 122,1398 107,1398"/>
          <polygon fill="#f00" points="125,1383 150,1390 150,1382 176,1410 145,1412 148,1402 122,1395"/>
          <polygon fill="#00d000" points="125,1345 145,1345 145,1365 125,1365"/>
          <polygon fill="#0000e0" points="107,1342 128,1342 128,1372 107,1372"/>
        </g>
        <g fill="none" stroke="#0a8a0a" stroke-width="1">
          <circle cx="516" cy="148" r="11"/><circle cx="516" cy="191" r="11"/><circle cx="516" cy="395" r="11"/><circle cx="516" cy="500" r="11"/><circle cx="516" cy="516" r="11"/><circle cx="1395" cy="147" r="11"/><circle cx="1579" cy="147" r="11"/><circle cx="1675" cy="147" r="11"/><circle cx="1773" cy="147" r="11"/><circle cx="1908" cy="677" r="11"/>
        </g>
        <g fill="#fff" font-family="'Liberation Sans',sans-serif" font-size="16" text-anchor="middle">
          <text x="516" y="154">E</text><text x="516" y="197">D</text><text x="516" y="401">C</text><text x="516" y="506">B</text><text x="516" y="522">1</text><text x="1097" y="151">1/1</text><text x="1395" y="153">1/2</text><text x="1579" y="153">3</text><text x="1675" y="153">G</text><text x="1773" y="153">4</text><text x="1908" y="683">D</text><text x="513" y="449">50</text>
          <text transform="translate(672 156) rotate(-62)">1200</text>
          <text transform="translate(640 216) rotate(-62)">500</text>
          <text transform="translate(581 318) rotate(-62)">2400</text>
        </g>
        <g font-family="'Liberation Sans',sans-serif" font-size="15" text-anchor="middle">
          <text x="554" y="623" fill="#2020ff">Z</text><text x="569" y="622" fill="#00e000">Y</text><text x="587" y="659" fill="#f00">X</text>
        </g>
      </svg>
      <div class="gl-viewbar d-flex flex-column align-items-center">
        <svg width="22" height="22" viewBox="0 0 22 22"><ellipse cx="11" cy="11" rx="9.500" ry="8.500" fill="#e3eefc" stroke="#2b7de9" stroke-width="1.200"/><path d="M2 15C8 15 17 9 19 4" fill="none" stroke="#555b6e" stroke-width="1.200"/></svg>
        <svg width="20" height="24" viewBox="0 0 20 24"><rect x=".6" y=".6" width="18.800" height="22.800" rx="1.500" fill="none" stroke="#555b6e"/><text x="2.500" y="19" font-size="8" font-weight="700" fill="#2b7de9">2D</text></svg>
        <svg width="22" height="24" viewBox="0 0 22 24"><path class="gl-thin" d="M1 7h15v16H3a2 2 0 0 1-2-2zM16 7l5-5v15l-5 6"/><path class="gl-tb" d="M1 7l5-5h15l-5 5"/></svg>
        <i class="gl-vtri"></i>
        <svg width="22" height="24" viewBox="0 0 22 24"><path fill="#cfe2f8" stroke="#2b7de9" stroke-width="1.200" d="M1 7h15v16H3a2 2 0 0 1-2-2zM16 7l5-5v15l-5 6zM1 7l5-5h15l-5 5z"/></svg>
        <i class="gl-vtri"></i>
        <svg class="gl-vgap" width="22" height="22" viewBox="0 0 22 22"><path class="gl-thin" d="M1 6V2a1 1 0 0 1 1-1h4M16 1h4a1 1 0 0 1 1 1v4M1 16v4a1 1 0 0 0 1 1h4M16 21h4a1 1 0 0 0 1-1v-4"/></svg>
        <svg width="22" height="24" viewBox="0 0 22 24"><rect x=".6" y=".6" width="20.800" height="22.800" rx="2" fill="none" stroke="#555b6e" stroke-dasharray="2 1.500"/><path class="gl-tb" d="M11 6l5 3v6l-5 3-5-3V9zM6 9l5 3 5-3M11 12v6"/></svg>
        <i class="gl-vline"></i>
        <svg width="22" height="24" viewBox="0 0 22 24"><path class="gl-thin" d="M13 23H3a2 2 0 0 1-2-2V3a2 2 0 0 1 2-2h16a2 2 0 0 1 2 2v11M4 7h2M8 7h9M4 12h2M8 12h6M4 17h2M8 17h2"/><circle cx="18" cy="19" r="3.500" class="gl-tb"/><circle cx="18" cy="19" r="1.200" fill="#2b7de9"/></svg>
      </div>
    </div>
    <div class="gl-split"><i></i></div>
    <div class="gl-edit">
      <div class="gl-cross">×</div>
      <div class="gl-phead">编辑钢筋</div>
      <div class="gl-etool d-flex align-items-center">
        <svg class="gl-nv" width="16" height="16" viewBox="0 0 16 16"><path fill="none" stroke="#bbb" stroke-width="1.200" d="M3 2v12M13 2L6 8l7 6z"/></svg>
        <svg class="gl-nv" width="16" height="16" viewBox="0 0 16 16"><path fill="none" stroke="#bbb" stroke-width="1.200" d="M12 2L5 8l7 6z"/></svg>
        <svg class="gl-nv" width="16" height="16" viewBox="0 0 16 16"><path fill="none" stroke="#2b7de9" stroke-width="1.200" d="M4 2l7 6-7 6z"/></svg>
        <svg class="gl-nv" width="16" height="16" viewBox="0 0 16 16"><path fill="none" stroke="#2b7de9" stroke-width="1.200" d="M13 2v12M3 2l7 6-7 6z"/></svg>
        <svg class="gl-up" width="16" height="16" viewBox="0 0 16 16"><rect x="1.600" y=".6" width="12.800" height="14.800" rx="1.500" fill="none" stroke="#bbb"/><path fill="none" stroke="#bbb" d="M8 12V4M5 7l3-3 3 3"/></svg>
        <svg style="margin-right:11px" width="16" height="16" viewBox="0 0 16 16"><rect x="1.600" y=".6" width="12.800" height="14.800" rx="1.500" fill="none" stroke="#555b6e"/><path class="gl-tb" d="M8 4v8M5 9l3 3 3-3"/></svg>
        <svg class="gl-ic" width="17" height="15" viewBox="0 0 17 15"><path class="gl-thin" d="M1 2h8v4H1zM1 9h8v4H1z"/><path class="gl-tb" d="M11 7.500h5M14 5l2.500 2.500L14 10"/></svg><span class="gl-tx">插入</span>
        <svg class="gl-ic" width="13" height="15" style="margin-right:7px" viewBox="0 0 13 15"><path class="gl-thin" d="M0 3h13M4 3V1h5v2M1.500 3v11.400h10V3"/><path stroke="#d22" stroke-width="1.200" d="M5 6v6M8 6v6"/></svg><span class="gl-tx">删除</span>
        <svg class="gl-ic" width="15" height="15" style="margin-right:4px" viewBox="0 0 15 15"><path class="gl-tb" d="M1 1v12M4 5v8M7 3v10M10 7v6M13 9v4M0 13.500h15"/></svg><span class="gl-tx">缩尺配筋</span>
        <svg class="gl-ic" width="15" height="15" style="margin-right:4px" viewBox="0 0 15 15"><path class="gl-thin" d="M8 14.400H1V.6h13V8M3 4h2M6 4h6M3 7.500h2M6 7.500h5M3 11h2"/><circle cx="12" cy="12" r="2.500" class="gl-tb"/></svg><span class="gl-tx">钢筋信息</span>
        <svg class="gl-ic" width="15" height="15" style="margin-right:5px" viewBox="0 0 15 15"><rect x=".6" y=".6" width="13.800" height="13.800" rx="1.500" class="gl-thin"/><path class="gl-tb" d="M4 3v8h7V7H4M3 12.500h9"/></svg><span class="gl-tx">钢筋图库</span>
        <span style="margin-right:6px">其他</span><i class="gl-caret"></i>
        <span>单构件钢筋总重(kg)：11.623</span>
      </div>
      <table class="table gl-grid">
        <colgroup><col width="7"><col width="73"><col width="56"><col width="36"><col width="33"><col width="217"><col width="166"><col width="231"><col width="38"><col width="39"><col width="49"><col width="61"><col width="61"><col width="71"><col width="74"><col width="71"><col width="132"></colgroup>
        <thead><tr><th></th><th class="gl-headon">筋号</th><th>直径(mm)</th><th>级别</th><th>图号</th><th>图形</th><th>计算公式</th><th>公式描述</th><th><div class="gl-bendin">弯曲调整</div></th><th>长度</th><th>根数</th><th>搭接</th><th>损耗(%)</th><th>单重(kg)</th><th>总重(kg)</th><th>钢筋归类</th><th>搭接形式</th></tr></thead>
        <tbody>
          <tr class="gl-row"><td class="gl-rn gl-rnon">1</td><td class="gl-cur">角筋.1</td><td>10</td><td class="text-center">Φ</td><td>1</td>
            <td class="gl-shape"><svg width="216" height="44" viewBox="0 0 216 44"><text x="110" y="23" text-anchor="middle" fill="#e01010" font-size="12" font-family="'Liberation Serif',serif">2370</text><path d="M11 31h193" stroke="#000" stroke-width="2"/></svg></td>
            <td>2370</td><td>柱净高</td><td>(0)</td><td>2370</td><td>4</td><td>0</td><td>0</td><td>1.462</td><td>5.848</td><td>直筋</td><td>绑扎</td></tr>
          <tr class="gl-row"><td class="gl-rn">2</td><td>构造柱预留筋.1</td><td>10</td><td class="text-center">Φ</td><td>1</td>
            <td class="gl-shape"><svg width="216" height="44" viewBox="0 0 216 44"><text x="110" y="23" text-anchor="middle" fill="#e01010" font-size="12" font-family="'Liberation Serif',serif">1650</text><path d="M11 31h193" stroke="#000" stroke-width="2"/></svg></td>
            <td>56*d+530+56*d</td><td>搭接+节点高度+上层构造柱绑扎长度</td><td>(0)</td><td>1650</td><td>4</td><td>0</td><td>0</td><td>1.018</td><td>4.072</td><td>直筋</td><td>绑扎</td></tr>
          <tr class="gl-row"><td class="gl-rn">3</td><td>箍筋.1</td><td>6</td><td class="text-center">Φ</td><td>195</td>
            <td class="gl-shape"><svg width="216" height="44" viewBox="0 0 216 44"><text x="71" y="29" text-anchor="middle" fill="#333" font-size="19" font-family="'Liberation Serif',serif">125</text><rect x="106" y="2" width="61" height="39.500" fill="none" stroke="#000" stroke-width="1.500"/><text x="123" y="34" text-anchor="middle" fill="#e01010" font-size="19" font-family="'Liberation Serif',serif">150</text><path d="M145 14l15-10M152 22l10-14" stroke="#000" stroke-width="1.500"/></svg></td>
            <td>2*(150+125)+2*(6.9*d)</td><td></td><td>41</td><td>592</td><td>13</td><td>0</td><td>0</td><td>0.131</td><td>1.703</td><td>箍筋</td><td>绑扎</td></tr>
          <tr class="gl-blank"><td class="gl-rn">4</td><td></td><td></td><td></td><td></td><td></td><td></td><td></td><td></td><td></td><td></td><td></td><td></td><td></td><td></td><td></td><td></td></tr>
        </tbody>
      </table>
      <div class="gl-hs"><b class="gl-l"></b><i></i><b class="gl-r"></b></div>
      <svg class="gl-redarrow" viewBox="504 695 1415 283"><polygon fill="#f02020" points="976.600,766 973,817 978.500,817 968,831 961,817 967,815.500"/><polygon fill="#f02020" points="1168,782 1157,825.600 1162,834 1149.500,835.700 1147,820.600 1152,823"/></svg>
      <div class="gl-gauge"><i></i></div>
    </div>
  </div>
</div>

<div class="gl-status d-flex align-items-center">
  <div class="gl-s0">X = 351967 Y = 351449 Z = 11490</div>
  <div class="gl-s1">层高： 2.9</div>
  <div class="gl-s2">标高： 11.49~14.39</div>
  <div class="gl-s3">1(2)</div>
  <div class="gl-s4">隐藏：0</div>
  <div class="gl-sbtns d-flex">
    <div class="gl-sbtn gl-son gl-sw25 d-flex align-items-center justify-content-center"><svg width="14" height="14" viewBox="0 0 14 14"><path class="gl-tb" d="M2 1v12h11M2 8h5v5"/></svg></div>
    <div class="gl-sbtn gl-son gl-sw36 d-flex align-items-center justify-content-center"><svg width="16" height="16" viewBox="0 0 16 16"><rect x="2" y="2" width="13" height="13" rx="2" class="gl-thin"/><circle cx="2" cy="2" r="1.500" class="gl-tb"/></svg><i class="gl-caret"></i></div>
    <div class="gl-sbtn gl-sw25 d-flex align-items-center justify-content-center"><svg width="16" height="16" viewBox="0 0 16 16"><path d="M1 1l14 14M15 1L1 15" stroke="#999"/></svg></div>
    <div class="gl-sbtn gl-son gl-sw36 d-flex align-items-center justify-content-center"><svg width="16" height="14" viewBox="0 0 16 14"><path d="M1 12L12 2M1 13h14" stroke="#999" stroke-width="1.200"/></svg><i class="gl-caret"></i></div>
    <div class="gl-sbtn gl-sw34 d-flex align-items-center justify-content-center"><svg width="18" height="14" viewBox="0 0 18 14"><path class="gl-thin" d="M0 3h6M3 0v6"/><rect x="4" y="8" width="13" height="5" fill="#555b6e"/></svg><i class="gl-caret"></i></div>
    <div class="gl-sbtn gl-son gl-sw23 d-flex align-items-center justify-content-center"><svg width="14" height="16" viewBox="0 0 14 16"><rect x="1" y="1" width="9" height="12" fill="#2b7de9" stroke="#1a4f9e"/><path d="M11 10l3 3-3 3z" fill="#2b7de9"/></svg></div>
    <div class="gl-sbtn gl-sw23 d-flex align-items-center justify-content-center"><svg width="14" height="16" viewBox="0 0 14 16"><path class="gl-thin" d="M1 15C1 7 5 3 13 1"/><path d="M9 9l4 3-4 3z" fill="#555b6e"/></svg></div>
  </div>
  <div>按鼠标左键指定第一个角点，或拾取构件图元</div>
</div>

<script src="https://cdn.jsdelivr.net/npm/bootstrap@5.3.0/dist/js/bootstrap.bundle.min.js"></script>
</body>
</html>
